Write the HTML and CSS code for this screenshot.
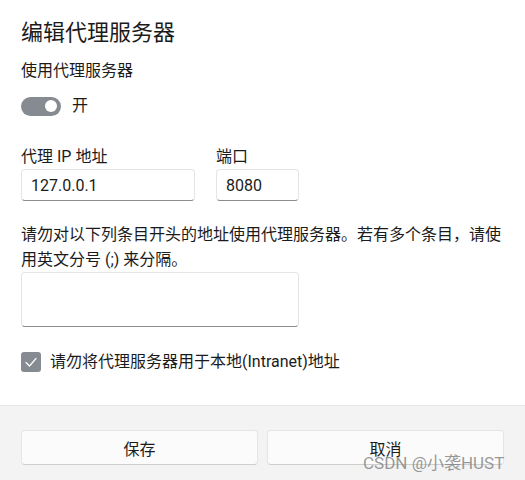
FILE: index.html
```html
<!DOCTYPE html>
<html lang="zh-CN">
<head>
<meta charset="utf-8">
<title>编辑代理服务器</title>
<link rel="stylesheet" href="styles.css">
</head>
<body>
<div class="dialog">
  <main class="content">
    <h1 class="title">编辑代理服务器</h1>
    <div class="label">使用代理服务器</div>
    <div class="toggle-row">
      <span class="toggle"><span class="knob"></span></span>
      <span class="toggle-text">开</span>
    </div>
    <div class="fields">
      <div class="field field-ip">
        <div class="label">代理 IP 地址</div>
        <div class="input">127.0.0.1</div>
      </div>
      <div class="field field-port">
        <div class="label">端口</div>
        <div class="input">8080</div>
      </div>
    </div>
    <p class="desc">请勿对以下列条目开头的地址使用代理服务器。若有多个条目，请使用英文分号 (;) 来分隔。</p>
    <div class="textarea"></div>
    <div class="check-row">
      <span class="checkbox">
        <svg width="20" height="20" viewBox="0 0 20 20"><polyline points="5,10.5 8.5,14 15,6.5" fill="none" stroke="#ffffff" stroke-width="1.2" stroke-linecap="round" stroke-linejoin="round"/></svg>
      </span>
      <span class="check-text">请勿将代理服务器用于本地(Intranet)地址</span>
    </div>
  </main>
  <footer class="footer">
    <button class="btn">保存</button>
    <button class="btn">取消</button>
  </footer>
  <div class="watermark">CSDN @小袭HUST</div>
</div>
</body>
</html>
```

FILE: styles.css
```css
* { box-sizing: border-box; }
html, body {
  margin: 0;
  padding: 0;
  background: #ffffff;
}
body {
  font-family: Roboto, "Noto Sans CJK SC", sans-serif;
  color: #1b1b1b;
  font-size: 16px;
}
.dialog {
  position: relative;
  width: 525px;
  height: 480px;
  display: flex;
  flex-direction: column;
  overflow: hidden;
}
.content {
  flex: 1;
  padding: 19px 21px 0 21px;
}
.title {
  margin: 0;
  font-size: 22px;
  font-weight: 400;
  line-height: 28px;
}
.label {
  font-size: 16px;
  line-height: 22px;
}
.content > .label {
  margin-top: 13px;
}
.toggle-row {
  margin-top: 14px;
  display: flex;
  align-items: center;
  gap: 11px;
  height: 20px;
}
.toggle {
  width: 40px;
  height: 19px;
  border-radius: 10px;
  background: #868a91;
  display: flex;
  align-items: center;
  justify-content: flex-end;
  padding-right: 4px;
}
.knob {
  width: 12px;
  height: 12px;
  border-radius: 50%;
  background: #ffffff;
}
.toggle-text {
  line-height: 20px;
}
.fields {
  margin-top: 30px;
  display: flex;
  gap: 21px;
}
.field-ip { width: 174px; }
.field-port { width: 83px; }
.input {
  margin-top: 1px;
  height: 32px;
  border: 1px solid #e5e5e5;
  border-bottom-color: #8d8d8d;
  border-radius: 4px;
  padding: 0 9px;
  display: flex;
  align-items: center;
  font-size: 16px;
  background: #ffffff;
}
.desc {
  margin: 21px 0 0 0;
  line-height: 25px;
  font-size: 16px;
}
.textarea {
  width: 278px;
  height: 55px;
  border: 1px solid #e5e5e5;
  border-bottom-color: #8d8d8d;
  border-radius: 4px;
  background: #ffffff;
}
.check-row {
  margin-top: 25px;
  display: flex;
  align-items: center;
  gap: 9px;
  height: 20px;
}
.checkbox {
  width: 20px;
  height: 20px;
  border-radius: 3px;
  background: #868a91;
  display: block;
}
.checkbox svg { display: block; }
.check-text { line-height: 20px; }
.footer {
  height: 75px;
  border-top: 1px solid #e5e5e5;
  background: #f3f3f3;
  padding: 24px 21px 0 21px;
  display: grid;
  grid-template-columns: 1fr 1fr;
  gap: 9px;
  align-items: start;
}
.btn {
  height: 35px;
  font-family: Roboto, "Noto Sans CJK SC", sans-serif;
  font-size: 16px;
  color: #1b1b1b;
  background: #fbfbfb;
  border: 1px solid #e5e5e5;
  border-bottom-color: #cfcfcf;
  border-radius: 4px;
  padding: 0;
}
.watermark {
  position: absolute;
  left: 363px;
  top: 451px;
  font-size: 17px;
  line-height: 24px;
  color: rgba(120, 120, 120, 0.75);
  white-space: nowrap;
}
```
